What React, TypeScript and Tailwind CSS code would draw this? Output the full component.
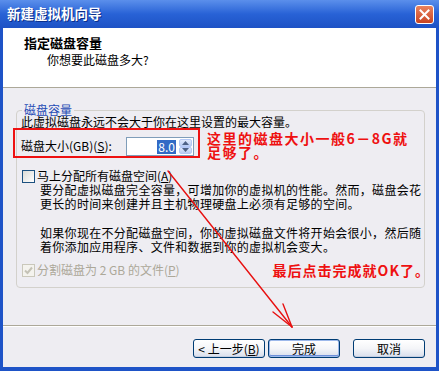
import React from "react";

const font = { fontFamily: '"Noto Sans CJK SC", "Noto Sans", sans-serif' };

function Checkbox({ checked, disabled }: { checked?: boolean; disabled?: boolean }) {
  return (
    <span
      className={
        "flex h-[13px] w-[13px] shrink-0 items-center justify-center border " +
        (disabled
          ? "border-[#CAC8BB] bg-[#F4F3EE]"
          : "border-[#1C5180] bg-gradient-to-br from-[#DCDCD7] to-white")
      }
    >
      {checked && (
        <svg width="9" height="9" viewBox="0 0 9 9">
          <path d="M1 4.5 L3.5 7 L8 1.5" fill="none" stroke={disabled ? "#C4C2B6" : "#21A121"} strokeWidth="2" />
        </svg>
      )}
    </span>
  );
}

function XpButton({ children, isDefault }: { children: React.ReactNode; isDefault?: boolean }) {
  return (
    <button
      className={
        "flex h-[19px] w-[72px] items-center justify-center whitespace-pre rounded-[3px] border border-[#003C74] bg-gradient-to-b from-white via-[#F4F5F8] to-[#D8DEEC] text-[12px] leading-none text-black " +
        (isDefault ? "shadow-[inset_0_0_0_1px_#9DB9EB,inset_0_-1px_0_1px_#6D8FD9]" : "shadow-[inset_0_-1px_0_0_#C5CEE0]")
      }
    >
      {children}
    </button>
  );
}

export default function App() {
  return (
    <div className="relative flex h-[371px] w-[439px] flex-col bg-[#1E53C7]" style={font}>
      {/* Title bar */}
      <div className="flex h-[28px] items-center justify-between bg-gradient-to-b from-[#5B8FEB] via-[#2862D6] to-[#1D52C5] pl-[7px] pr-[5px]">
        <span className="text-[13.5px] font-bold leading-none text-white [text-shadow:1px_1px_0_#0A2E8A]">
          新建虚拟机向导
        </span>
        <span className="flex h-[19px] w-[19px] items-center justify-center rounded-[3px] border border-white bg-gradient-to-b from-[#E9825E] to-[#C9431F]">
          <svg width="11" height="11" viewBox="0 0 11 11">
            <path d="M1.5 1.5 L9.5 9.5 M9.5 1.5 L1.5 9.5" stroke="white" strokeWidth="2" strokeLinecap="square" />
          </svg>
        </span>
      </div>

      {/* Client area */}
      <div className="mx-[3px] mb-[4px] flex flex-1 flex-col">
        {/* Header */}
        <div className="h-[60px] border-b border-[#ACA899] bg-white pl-[21px] pt-[7px]">
          <div className="text-[13px] font-bold leading-[16px] text-black">指定磁盘容量</div>
          <div className="mt-[2px] pl-[23px] text-[12px] leading-[14px] text-black">你想要此磁盘多大?</div>
        </div>

        {/* Body */}
        <div className="flex-1 bg-[#EEEDF2] pl-[13px] pr-[11px] pt-[22px]">
          <div className="relative rounded-[4px] border border-[#D3D1CC] px-[4px] pb-[10px] pt-[4px]">
            <span className="absolute -top-[7px] left-[5px] bg-[#EEEDF2] px-[2px] text-[12px] leading-[12px] text-[#1F4BB5]">
              磁盘容量
            </span>
            <div className="text-[12px] leading-[14px] text-black">此虚拟磁盘永远不会大于你在这里设置的最大容量。</div>

            <div className="-mt-[1px] flex items-start">
              <div className="-ml-[8px] flex h-[30px] w-[187px] shrink-0 items-end border-2 border-[#EE1111] pl-[6px]">
                <span className="mb-[3px] whitespace-nowrap text-[12px] leading-[14px] text-black">
                  磁盘大小(GB)(<span className="underline">S</span>):
                </span>
                <div className="ml-auto mr-[4px] flex h-[19px]">
                  <div className="flex h-[19px] w-[52px] items-center justify-end border border-r-0 border-[#7F9DB9] bg-white pr-[2px]">
                    <span className="bg-[#316AC5] px-[1px] text-[12px] leading-[14px] text-white">8.0</span>
                  </div>
                  <div className="flex h-[19px] w-[16px] flex-col border border-l-0 border-[#7F9DB9] bg-white p-[1px]">
                    <div className="flex flex-1 items-center justify-center rounded-[2px] border border-[#B4C8F6] bg-gradient-to-b from-[#E0E9FB] to-[#B9CCF2]">
                      <svg width="7" height="4" viewBox="0 0 7 4">
                        <path d="M0 4 L3.5 0 L7 4 Z" fill="#4D6185" />
                      </svg>
                    </div>
                    <div className="flex flex-1 items-center justify-center rounded-[2px] border border-[#B4C8F6] bg-gradient-to-b from-[#E0E9FB] to-[#B9CCF2]">
                      <svg width="7" height="4" viewBox="0 0 7 4">
                        <path d="M0 0 L3.5 4 L7 0 Z" fill="#4D6185" />
                      </svg>
                    </div>
                  </div>
                </div>
              </div>
              <div className="ml-[7px] mt-[3px] whitespace-nowrap text-[14px] font-bold leading-[14px] tracking-[1.5px] text-[#EE1111]">
                这里的磁盘大小一般6－8G就
                <br />
                足够了。
              </div>
            </div>

            <div className="mt-[10px] flex h-[14px] items-center">
              <span className="ml-[1px]">
                <Checkbox />
              </span>
              <span className="ml-[2px] text-[12px] leading-[14px] text-black">
                马上分配所有磁盘空间(<span className="underline">A</span>)
              </span>
            </div>
            <div className="whitespace-nowrap pl-[19px] text-[12px] leading-[14px] tracking-[0.3px] text-black">
              <p>要分配虚拟磁盘完全容量，可增加你的虚拟机的性能。然而，磁盘会花</p>
              <p>更长的时间来创建并且主机物理硬盘上必须有足够的空间。</p>
              <p className="mt-[15px]">如果你现在不分配磁盘空间，你的虚拟磁盘文件将开始会很小，然后随</p>
              <p>着你添加应用程序、文件和数据到你的虚拟机会变大。</p>
            </div>

            <div className="mt-[9px] flex h-[14px] items-center">
              <span className="ml-[1px]">
                <Checkbox checked disabled />
              </span>
              <span className="ml-[2px] whitespace-nowrap text-[12px] leading-[14px] text-[#ACA899]">
                分割磁盘为 2 GB 的文件(<span className="underline">P</span>)
              </span>
              <span className="-mr-[10px] ml-auto whitespace-nowrap text-[14px] font-bold leading-[14px] tracking-[1px] text-[#EE1111]">
                最后点击完成就OK了。
              </span>
            </div>
          </div>
        </div>

        {/* Footer */}
        <div className="flex h-[42px] items-start justify-end border-t border-[#ACA899] bg-[#EEEDF2] pr-[11px] pt-[13px] shadow-[inset_0_1px_0_0_white]">
          <XpButton>
            {"< 上一步("}
            <span className="underline">B</span>)
          </XpButton>
          <span className="ml-[3px]">
            <XpButton isDefault>完成</XpButton>
          </span>
          <span className="ml-[13px]">
            <XpButton>取消</XpButton>
          </span>
        </div>
      </div>

      {/* Annotation arrow */}
      <svg className="pointer-events-none absolute left-0 top-0" width="439" height="371" viewBox="0 0 439 371">
        <g stroke="#E81010" strokeWidth="1.4" fill="none" strokeLinecap="round">
          <path d="M168 171 L292 327" />
          <path d="M273 312 L292 327" />
          <path d="M283 304 L292 327" />
        </g>
      </svg>
    </div>
  );
}
